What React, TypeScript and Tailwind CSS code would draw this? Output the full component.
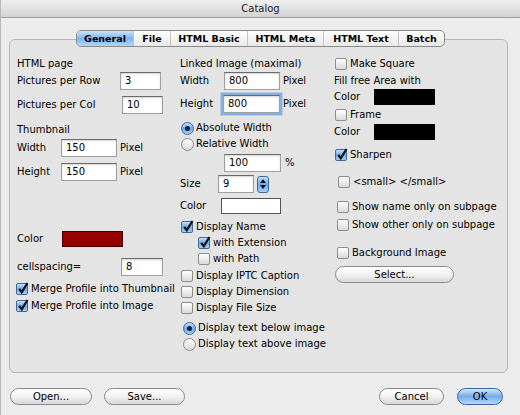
import React from "react";

type InputProps = { w: string; value: string; focus?: boolean };
const Input = ({ w, value, focus }: InputProps) => (
  <div
    className={`${w} h-[18px] shrink-0 bg-white border border-[#a0a0a0] border-t-[#6a6a6a] shadow-[inset_0_1px_2px_rgba(0,0,0,0.18)] flex items-center pl-[4px] ${
      focus ? "ring-[2.5px] ring-[#86b0e2]" : ""
    }`}
  >
    {value}
  </div>
);

const Check = ({ checked }: { checked?: boolean }) => (
  <span
    className={`relative inline-block w-[12px] h-[12px] rounded-[2px] border shrink-0 ${
      checked
        ? "border-[#41699c] bg-gradient-to-b from-[#c4e0fb] via-[#6ea9e8] to-[#a6cff5]"
        : "border-[#8d8d8d] bg-gradient-to-b from-[#ffffff] to-[#d9d9d9]"
    }`}
  >
    {checked && (
      <svg className="absolute left-[0px] top-[-3px]" width="12" height="14" viewBox="0 0 12 14">
        <path d="M2.2 7.8 L4.8 11.2 L10.5 2" fill="none" stroke="#111" strokeWidth="2.2" />
      </svg>
    )}
  </span>
);

const Radio = ({ on }: { on?: boolean }) => (
  <span
    className={`inline-flex items-center justify-center w-[13px] h-[13px] rounded-full border shrink-0 ${
      on
        ? "border-[#41699c] bg-gradient-to-b from-[#c4e0fb] via-[#6ea9e8] to-[#a6cff5]"
        : "border-[#8d8d8d] bg-gradient-to-b from-[#ffffff] to-[#d9d9d9]"
    }`}
  >
    {on && <span className="w-[5px] h-[5px] rounded-full bg-[#0f213d]" />}
  </span>
);

type BtnProps = { w: string; label: string; primary?: boolean };
const Btn = ({ w, label, primary }: BtnProps) => (
  <div
    className={`${w} h-[17px] shrink-0 rounded-full border flex items-center justify-center ${
      primary
        ? "border-[#3b64a0] bg-gradient-to-b from-[#d2e6fb] via-[#74ace9] to-[#b6d8f8]"
        : "border-[#8a8a8a] bg-gradient-to-b from-[#ffffff] via-[#f1f1f1] to-[#d8d8d8]"
    }`}
  >
    {label}
  </div>
);

const CheckRow = ({ label, checked, cls }: { label: string; checked?: boolean; cls: string }) => (
  <div className={`h-[16px] flex items-center whitespace-nowrap ${cls}`}>
    <Check checked={checked} />
    <span className="ml-[3px]">{label}</span>
  </div>
);

const RadioRow = ({ label, on, cls }: { label: string; on?: boolean; cls: string }) => (
  <div className={`h-[16px] flex items-center whitespace-nowrap ${cls}`}>
    <Radio on={on} />
    <span className="ml-[2px]">{label}</span>
  </div>
);

const tabs = [
  { label: "General", w: "w-[56px]", sel: true },
  { label: "File", w: "w-[37px]" },
  { label: "HTML Basic", w: "w-[77px]" },
  { label: "HTML Meta", w: "w-[76px]" },
  { label: "HTML Text", w: "w-[75px]" },
  { label: "Batch", w: "w-[46px]" },
];

export default function App() {
  return (
    <div className="w-[520px] h-[415px] bg-[#ececec] text-[10px] leading-[16px] text-black font-['DejaVu_Sans',sans-serif] flex flex-col overflow-hidden border-l border-[#b8b8b8]">
      {/* title bar */}
      <div className="h-[18px] shrink-0 flex items-center justify-center bg-gradient-to-b from-[#efefef] to-[#d3d3d3] border-b border-[#9c9c9c] text-[#222]">
        Catalog
      </div>

      {/* tabs */}
      <div className="mt-[12px] h-[17px] shrink-0 flex justify-center relative z-10">
        <div className="flex h-[17px] rounded-[5px] border border-[#8a8a8a] overflow-hidden bg-gradient-to-b from-[#ffffff] to-[#e8e8e8] text-[9.5px] font-bold leading-[15px]">
          {tabs.map((t, i) => (
            <div
              key={t.label}
              className={`${t.w} flex items-center justify-center ${i > 0 ? "border-l border-[#c4c4c4]" : ""} ${
                t.sel ? "bg-gradient-to-b from-[#cde3f9] via-[#7fb5ec] to-[#b3d6f7]" : ""
              }`}
            >
              {t.label}
            </div>
          ))}
        </div>
      </div>

      {/* group box */}
      <div className="mt-[-8px] ml-[8px] mr-[12px] h-[334px] shrink-0 rounded-[6px] border border-[#b5b5b5] bg-[#e4e4e4] flex pl-[7px] pt-[16px]">
        {/* column 1 */}
        <div className="w-[163px] shrink-0 flex flex-col">
          <div className="h-[16px]">HTML page</div>
          <div className="h-[18px] flex items-center">
            <span className="w-[103px]">Pictures per Row</span>
            <Input w="w-[41px]" value="3" />
          </div>
          <div className="mt-[6px] h-[18px] flex items-center">
            <span className="w-[105px]">Pictures per Col</span>
            <Input w="w-[41px]" value="10" />
          </div>
          <div className="mt-[8px] h-[16px]">Thumbnail</div>
          <div className="mt-[1px] h-[18px] flex items-center">
            <span className="w-[44px]">Width</span>
            <Input w="w-[56px]" value="150" />
            <span className="ml-[3px]">Pixel</span>
          </div>
          <div className="mt-[6px] h-[18px] flex items-center">
            <span className="w-[44px]">Height</span>
            <Input w="w-[56px]" value="150" />
            <span className="ml-[3px]">Pixel</span>
          </div>
          <div className="mt-[49px] h-[18px] flex items-center">
            <span className="w-[45px]">Color</span>
            <div className="w-[61px] h-[16px] bg-[#960000] border border-[#3c0000]" />
          </div>
          <div className="mt-[10px] h-[18px] flex items-center">
            <span className="w-[104px]">cellspacing=</span>
            <Input w="w-[42px]" value="8" />
          </div>
          <CheckRow cls="mt-[5px] ml-[-1px]" checked label="Merge Profile into Thumbnail" />
          <CheckRow cls="mt-[1px] ml-[-1px]" checked label="Merge Profile into Image" />
        </div>

        {/* column 2 */}
        <div className="w-[154px] shrink-0 flex flex-col">
          <div className="h-[16px]">Linked Image (maximal)</div>
          <div className="h-[18px] flex items-center">
            <span className="w-[44px]">Width</span>
            <Input w="w-[56px]" value="800" />
            <span className="ml-[3px]">Pixel</span>
          </div>
          <div className="mt-[5px] h-[18px] flex items-center">
            <span className="w-[43px]">Height</span>
            <Input w="w-[57px]" value="800" focus />
            <span className="ml-[3px]">Pixel</span>
          </div>
          <RadioRow cls="mt-[7px] ml-[1px]" on label="Absolute Width" />
          <RadioRow cls="ml-[1px]" label="Relative Width" />
          <div className="mt-[2px] h-[18px] flex items-center pl-[44px]">
            <Input w="w-[57px]" value="100" />
            <span className="ml-[4px]">%</span>
          </div>
          <div className="mt-[3px] h-[18px] flex items-center">
            <span className="w-[38px]">Size</span>
            <Input w="w-[36px]" value="9" />
            <div className="ml-[3px] w-[12px] h-[17px] rounded-[3px] border border-[#41699c] bg-gradient-to-b from-[#c4e0fb] via-[#6ea9e8] to-[#a6cff5] flex flex-col items-center justify-center gap-[2px]">
              <svg width="6" height="4" viewBox="0 0 6 4">
                <path d="M0 4 L3 0 L6 4Z" fill="#111" />
              </svg>
              <svg width="6" height="4" viewBox="0 0 6 4">
                <path d="M0 0 L3 4 L6 0Z" fill="#111" />
              </svg>
            </div>
          </div>
          <div className="mt-[4px] h-[18px] flex items-center">
            <span className="w-[41px]">Color</span>
            <div className="w-[60px] h-[16px] bg-white border border-[#555]" />
          </div>
          <CheckRow cls="mt-[4px] ml-[1px]" checked label="Display Name" />
          <CheckRow cls="ml-[18px]" checked label="with Extension" />
          <CheckRow cls="ml-[18px]" label="with Path" />
          <CheckRow cls="mt-[1px] ml-[1px]" label="Display IPTC Caption" />
          <CheckRow cls="ml-[1px]" label="Display Dimension" />
          <CheckRow cls="ml-[1px]" label="Display File Size" />
          <RadioRow cls="mt-[4px] ml-[3px]" on label="Display text below image" />
          <RadioRow cls="ml-[3px]" label="Display text above image" />
        </div>

        {/* column 3 */}
        <div className="flex-1 flex flex-col">
          <CheckRow cls="ml-[1px]" label="Make Square" />
          <div className="mt-[1px] h-[16px]">Fill free Area with</div>
          <div className="h-[16px] flex items-center">
            <span className="w-[40px]">Color</span>
            <div className="w-[61px] h-[16px] bg-black" />
          </div>
          <CheckRow cls="mt-[2px] ml-[1px]" label="Frame" />
          <div className="mt-[1px] h-[16px] flex items-center">
            <span className="w-[40px]">Color</span>
            <div className="w-[61px] h-[16px] bg-black" />
          </div>
          <CheckRow cls="mt-[7px] ml-[1px]" checked label="Sharpen" />
          <CheckRow cls="mt-[11px] ml-[4px]" label={"<small> </small>"} />
          <CheckRow cls="mt-[9px] ml-[3px]" label="Show name only on subpage" />
          <CheckRow cls="mt-[2px] ml-[3px]" label="Show other only on subpage" />
          <CheckRow cls="mt-[12px] ml-[3px]" label="Background Image" />
          <div className="mt-[5px] ml-[1px]">
            <Btn w="w-[119px]" label="Select..." />
          </div>
        </div>
      </div>

      {/* footer buttons */}
      <div className="mt-[15px] h-[17px] shrink-0 flex items-center pl-[9px] pr-[17px]">
        <Btn w="w-[82px]" label="Open..." />
        <div className="ml-[12px]">
          <Btn w="w-[81px]" label="Save..." />
        </div>
        <div className="ml-auto">
          <Btn w="w-[65px]" label="Cancel" />
        </div>
        <div className="ml-[13px]">
          <Btn w="w-[46px]" label="OK" primary />
        </div>
      </div>
    </div>
  );
}
